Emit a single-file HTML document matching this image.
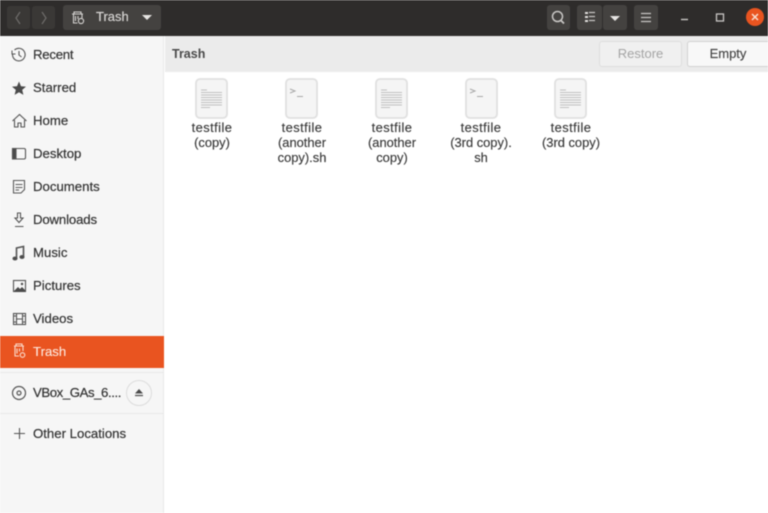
<!DOCTYPE html>
<html>
<head>
<meta charset="utf-8">
<style>
html,body{margin:0;padding:0;width:768px;height:513px;overflow:hidden;background:#fff;font-family:"Liberation Sans",sans-serif;}
*{box-sizing:border-box;}
.a{position:absolute;}
#wrap{position:absolute;left:0;top:0;width:768px;height:513px;overflow:hidden;background:#fff;filter:blur(.45px);}
#title{left:0;top:0;width:768px;height:36px;background:#2e2c2b;}
.btn{position:absolute;background:#444240;border-radius:3px;}
#side{left:0;top:36px;width:164px;height:477px;background:#f6f6f6;border-right:1px solid #e8e8e8;}
.it{position:absolute;left:33px;font-size:13.2px;color:#333;line-height:16px;white-space:nowrap;-webkit-text-stroke:.2px #333;}
#bar{left:165px;top:36px;width:603px;height:36px;background:#ebebeb;}
.f{position:absolute;width:90px;text-align:center;font-size:12.9px;line-height:15px;color:#3a3a3a;top:120px;-webkit-text-stroke:.15px #3a3a3a;}
.f b{font-weight:normal;letter-spacing:.45px;}
.doc{position:absolute;top:78px;width:34px;height:41px;}
</style>
</head>
<body>
<div id="wrap">
<div class="a" id="title"></div>
<div class="btn" style="left:7px;top:6px;width:23px;height:23px;background:#3a3836"></div>
<div class="btn" style="left:32px;top:6px;width:23px;height:23px;background:#3a3836"></div>
<div class="btn" style="left:63px;top:5px;width:98px;height:25px"></div>
<svg class="a" style="left:0;top:0" width="768" height="36" fill="none">
<path d="M20 12l-4 6 4 6" stroke="#6e6c6a" stroke-width="1.2"/>
<path d="M42 12l4 6-4 6" stroke="#6e6c6a" stroke-width="1.2"/>
<g stroke="#d6d4d2" stroke-width="1.1">
<path d="M72 14h11M74 14v-2h7v2M73.500 14v9h4M82 14v4M75.500 16v5M78 16v3"/>
<circle cx="81" cy="21" r="2.600"/>
</g>
<path d="M142 15h10l-5 5z" fill="#e6e4e2"/>
<rect x="547" y="5" width="23" height="25" rx="3" fill="#444240"/>
<circle cx="557.500" cy="16.500" r="5" stroke="#c8c6c4" stroke-width="1.500"/>
<path d="M561 20.500l3 3" stroke="#c8c6c4" stroke-width="1.800"/>
<rect x="577" y="5" width="25" height="25" rx="3" fill="#444240"/>
<rect x="603" y="5" width="24" height="25" rx="3" fill="#444240"/>
<path d="M585 13h3v2h-3zM585 17h3v2h-3zM585 21h3v2h-3z" fill="#e0dedc" transform="translate(0,-1)"/>
<path d="M589 13h6M589 17h6M589 21h6" stroke="#c8c6c4" stroke-width="1.300" transform="translate(0,-.500)"/>
<path d="M610 16h10l-5 5z" fill="#e6e4e2"/>
<rect x="634" y="5" width="24" height="25" rx="3" fill="#444240"/>
<path d="M641 13.500h10M641 17.500h10M641 21.500h10" stroke="#c8c6c4" stroke-width="1.300"/>
<path d="M681 19.500h7" stroke="#c8c6c4" stroke-width="1.400"/>
<rect x="716.500" y="14" width="7" height="7" stroke="#c8c6c4" stroke-width="1.300"/>
<circle cx="755" cy="17" r="9" fill="#e95420"/>
<path d="M752 14l6 6M758 14l-6 6" stroke="#f8ddd0" stroke-width="1.500"/>
</svg>
<div class="a" style="left:96px;top:9px;font-size:13px;line-height:16px;color:#d8d6d4;-webkit-text-stroke:.15px #d8d6d4">Trash</div>

<div class="a" id="side"></div>
<div class="a" style="left:0;top:336px;width:164px;height:32px;background:#e95420"></div>
<div class="a" style="left:0;top:372px;width:164px;height:1px;background:#e8e8e8"></div>
<div class="a" style="left:0;top:413px;width:164px;height:1px;background:#e8e8e8"></div>

<div class="it" style="top:47px;letter-spacing:-.25px">Recent</div>
<div class="it" style="top:80px">Starred</div>
<div class="it" style="top:113px">Home</div>
<div class="it" style="top:146px">Desktop</div>
<div class="it" style="top:179px">Documents</div>
<div class="it" style="top:212px;letter-spacing:-.15px">Downloads</div>
<div class="it" style="top:245px">Music</div>
<div class="it" style="top:278px">Pictures</div>
<div class="it" style="top:311px">Videos</div>
<div class="it" style="top:344px;color:#fde9df;-webkit-text-stroke:.1px #fde9df">Trash</div>
<div class="it" style="top:385px;letter-spacing:-.42px">VBox_GAs_6....</div>
<div class="it" style="top:426px">Other Locations</div>

<svg class="a" style="left:0;top:0" width="164" height="513" fill="none" stroke="#555" stroke-width="1.100">
<path d="M14.500 50a6.300 6.300 0 1 1-2 4.500"/><path d="M19 51v4l2.500 2"/><path d="M12 50.500v3.500h3.500" stroke-width="1"/>
<path d="M19 81.500l2 4.700 5 .4-3.800 3.300 1.200 5-4.400-2.700-4.400 2.700 1.200-5-3.800-3.300 5-.4z" fill="#4a4a4a" stroke="none"/>
<path d="M12.500 121l7-6.500 7 6.500M14.500 120v7h3.500v-4h3v4h3.500v-7"/>
<rect x="12.500" y="148.500" width="13" height="10.500" rx="1.500"/><rect x="12.500" y="148.500" width="3.500" height="10.500" fill="#4a4a4a"/>
<path d="M13.500 180.500h11v9l-3.500 3.500h-7.500zM15.500 184.500h7M15.500 187.500h7M15.500 190h3.500" stroke="#5a5a5a"/>
<path d="M17.500 213h3v5h2.500l-4 4.500-4-4.500h2.500zM15 226.500h8.500"/>
<path d="M16.500 258v-10l7-1.500v10" stroke-width="1.600"/><ellipse cx="15" cy="258.500" rx="2" ry="1.500" fill="#4a4a4a"/><ellipse cx="22" cy="257" rx="2" ry="1.500" fill="#4a4a4a"/>
<rect x="13.500" y="280.500" width="12" height="11"/><path d="M14 291l4-4 2 2 2-2 3 3v2H14z" fill="#4a4a4a" stroke="none"/><circle cx="22" cy="284" r="1.200" fill="#4a4a4a" stroke="none"/>
<rect x="13.500" y="313.500" width="12" height="11"/><path d="M16.500 313.500v11M22.500 313.500v11M16.500 319h6M13.500 316h3M13.500 322h3M22.500 316h3M22.500 322h3"/>
<g stroke="#fbdccd"><path d="M14 346h10M16 346v-2h6v2M15 346v10h4M23 346v5M17 348.500v5M19.500 348.500v3"/><circle cx="22.500" cy="355" r="2.300"/></g>
<circle cx="19" cy="393" r="6.500" stroke-width="1.200"/><circle cx="19" cy="393" r="2" stroke-width="1.200"/>
<circle cx="139" cy="393" r="12.500" stroke="#dcdcdc" stroke-width="1" fill="#f6f6f6"/>
<path d="M139 389l4 4.500h-8z" fill="#4a4a4a" stroke="none"/><path d="M135 395.500h8" stroke-width="1.300"/>
<path d="M19.500 428v11M14 433.500h11"/>
</svg>

<div class="a" id="bar"></div>
<div class="a" style="left:172px;top:46px;font-size:12.5px;font-weight:bold;line-height:16px;color:#4a4a4a">Trash</div>
<div class="a" style="left:599px;top:41px;width:83px;height:26px;background:#f0f0f0;border:1px solid #dedede;border-radius:3px;text-align:center;font-size:13px;line-height:24px;color:#a4a4a4">Restore</div>
<div class="a" style="left:687px;top:41px;width:81px;height:26px;background:#f8f8f8;border:1px solid #d2d2d2;border-right:0;border-radius:3px 0 0 3px;text-align:center;font-size:13px;line-height:24px;color:#444;-webkit-text-stroke:.15px #444">Empty</div>

<svg class="doc" style="left:194px" viewBox="0 0 34 41" fill="none"><rect x="2" y="1" width="31" height="39" rx="4" fill="#f5f5f5" stroke="#e0e0e0" stroke-width="1.800"/><path d="M7 12h6M7 14.500h21M7 17h21M7 19.500h21M7 22h21M7 24.500h21M7 27h21M7 29.500h9" stroke="#c0c0c0"/></svg>
<svg class="doc" style="left:284px" viewBox="0 0 34 41" fill="none"><rect x="2" y="1" width="31" height="39" rx="4" fill="#f5f5f5" stroke="#e0e0e0" stroke-width="1.800"/><path d="M6 11l5 2-5 2M13 18.500h6" stroke="#a8a8a8" stroke-width="1"/></svg>
<svg class="doc" style="left:374px" viewBox="0 0 34 41" fill="none"><rect x="2" y="1" width="31" height="39" rx="4" fill="#f5f5f5" stroke="#e0e0e0" stroke-width="1.800"/><path d="M7 12h6M7 14.500h21M7 17h21M7 19.500h21M7 22h21M7 24.500h21M7 27h21M7 29.500h9" stroke="#c0c0c0"/></svg>
<svg class="doc" style="left:464px" viewBox="0 0 34 41" fill="none"><rect x="2" y="1" width="31" height="39" rx="4" fill="#f5f5f5" stroke="#e0e0e0" stroke-width="1.800"/><path d="M6 11l5 2-5 2M13 18.500h6" stroke="#a8a8a8" stroke-width="1"/></svg>
<svg class="doc" style="left:553px" viewBox="0 0 34 41" fill="none"><rect x="2" y="1" width="31" height="39" rx="4" fill="#f5f5f5" stroke="#e0e0e0" stroke-width="1.800"/><path d="M7 12h6M7 14.500h21M7 17h21M7 19.500h21M7 22h21M7 24.500h21M7 27h21M7 29.500h9" stroke="#c0c0c0"/></svg>

<div class="f" style="left:167px"><b>testfile</b><br>(copy)</div>
<div class="f" style="left:257px"><b>testfile</b><br>(another<br>copy).sh</div>
<div class="f" style="left:347px"><b>testfile</b><br>(another<br>copy)</div>
<div class="f" style="left:436px"><b>testfile</b><br>(3rd copy).<br>sh</div>
<div class="f" style="left:526px"><b>testfile</b><br>(3rd copy)</div>
</div>
</body>
</html>
